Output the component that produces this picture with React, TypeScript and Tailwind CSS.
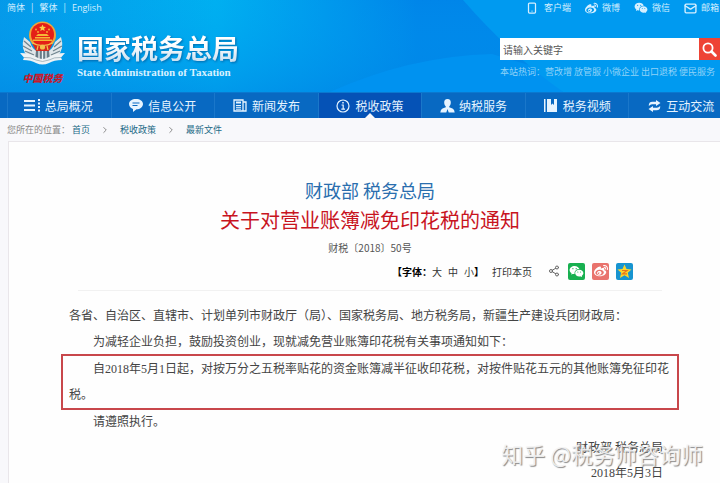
import type { ReactNode } from "react";
import { ChevronRight, Mail, Share2, Smartphone } from "lucide-react";
import { FaWeibo } from "react-icons/fa";
import { RiWechatFill } from "react-icons/ri";

const hotWords = ["营改增", "放管服", "小微企业", "出口退税", "便民服务"];

const navItems: { label: string; icon: ReactNode; active?: boolean }[] = [
  { label: "总局概况", icon: <ListIcon /> },
  { label: "信息公开", icon: <ChatIcon /> },
  { label: "新闻发布", icon: <NewsIcon /> },
  { label: "税收政策", icon: <InfoIcon />, active: true },
  { label: "纳税服务", icon: <PersonIcon /> },
  { label: "税务视频", icon: <BookIcon /> },
  { label: "互动交流", icon: <SwapIcon /> },
];

export default function App() {
  return (
    <div className="min-h-screen overflow-hidden bg-[#f8f8fb] font-['Noto_Sans_CJK_SC',sans-serif] text-[#333]">
      <Header />
      <MainNav />
      <Breadcrumb />
      <Article />
    </div>
  );
}

function Header() {
  return (
    <header className="relative h-[92px] bg-linear-to-r from-[#0698e8] via-[#00b0f0] via-30% to-[#0082e8] to-58% text-white">
      <HeaderBackdrop />
      <div className="relative flex h-4 items-center justify-between text-[9px] leading-4 text-[#d5efff]">
        <div className="flex gap-1.5 pl-[7px]">
          <a href="#jian">简体</a>
          <span>|</span>
          <a href="#fan">繁体</a>
          <span>|</span>
          <a href="#en" className="font-['Open_Sans',sans-serif]">English</a>
        </div>
        <div className="flex gap-3.5 pr-px">
          <a href="#app" className="flex items-center gap-1.5">
            <Smartphone size={12} strokeWidth={2.5} />
            客户端
          </a>
          <a href="#weibo" className="flex items-center gap-1">
            <FaWeibo size={13} />
            微博
          </a>
          <a href="#wechat" className="flex items-center gap-1">
            <RiWechatFill size={14} />
            微信
          </a>
          <a href="#mail" className="flex items-center gap-1">
            <Mail size={13} strokeWidth={2.5} />
            邮箱
          </a>
        </div>
      </div>

      <div className="relative flex items-start justify-between">
        <div className="flex gap-3 pl-5">
          <div className="flex w-[45px] flex-col items-center pt-1">
            <Emblem />
            <div className="text-[10px] leading-4 font-black whitespace-nowrap text-[#c8182b] italic">
              中国税务
            </div>
          </div>
          <div className="pt-4">
            <h1 className="bg-linear-to-b from-white from-40% to-[#c3dcee] bg-clip-text text-[27px] leading-8 font-bold text-transparent drop-shadow-[1px_1px_1px_rgba(0,50,110,0.5)]">
              国家税务总局
            </h1>
            <p className="font-['Liberation_Serif',serif] text-[11px] leading-4 font-bold text-[#d9f1ff]">
              State Administration of Taxation
            </p>
          </div>
        </div>

        <div className="w-[220px] pt-[22px]">
          <form className="flex h-[22px]">
            <input
              type="text"
              aria-label="站内搜索"
              placeholder="请输入关键字"
              className="min-w-0 flex-1 bg-white px-[3px] text-[10px] text-[#333] outline-none placeholder:text-[#555]"
            />
            <button type="button" aria-label="搜索" className="flex w-[21px] items-center justify-center bg-[#ee4335]">
              <SearchIcon />
            </button>
          </form>
          <div className="flex gap-0.5 pt-1 text-[9px] leading-4 whitespace-nowrap text-[#8fd2f8]">
            <span className="-mr-0.5">本站热词：</span>
            {hotWords.map((word) => (
              <a key={word} href="#hot">{word}</a>
            ))}
          </div>
        </div>
      </div>
    </header>
  );
}

function MainNav() {
  return (
    <nav className="border-t border-[#0a78cf] bg-[#0869c2]">
      <ul className="-mr-3 ml-[7px] grid grid-cols-7">
        {navItems.map((item) => (
          <li key={item.label} className="border-l border-[#1a77ca]">
            <a
              href="#nav"
              className={`relative flex h-[25px] items-center justify-center gap-[3px] pr-0.5 text-[12px] whitespace-nowrap text-[#e6f4ff] ${item.active ? "bg-[#0552b6]" : ""}`}
            >
              <span className="flex w-[18px] justify-center">{item.icon}</span>
              {item.label}
              {item.active && (
                <span className="absolute bottom-0 left-1/2 size-0 -translate-x-1/2 border-x-5 border-b-5 border-x-transparent border-b-[#f8f8fb]" />
              )}
            </a>
          </li>
        ))}
      </ul>
    </nav>
  );
}

function Breadcrumb() {
  return (
    <div className="flex h-[23px] items-center gap-0.5 pl-[7px] text-[9px] text-[#888]">
      <span>您所在的位置：</span>
      <div className="flex items-center gap-2.5 text-[#236a86]">
        <a href="#home">首页</a>
        <ChevronRight size={10} className="text-[#777]" />
        <a href="#policy">税收政策</a>
        <ChevronRight size={10} className="text-[#777]" />
        <a href="#latest">最新文件</a>
      </div>
    </div>
  );
}

function Article() {
  return (
    <main className="ml-2 border-t border-l border-[#e9e6ea] bg-[#fefefe] pt-[34px] pl-[11px]">
      <div className="text-center">
        <div className="text-[18px] leading-7 text-[#2a6eae]">财政部 税务总局</div>
        <h2 className="text-[20px] leading-8 text-[#c8141e]">关于对营业账簿减免印花税的通知</h2>
        <div className="text-[10px] leading-6 text-[#555]">财税〔2018〕50号</div>
      </div>

      <div className="mx-auto flex h-[22px] max-w-[602px] items-center justify-end gap-2 pr-[38px] text-[10px]">
        <div className="flex">
          <b className="text-black">【字体：</b>
          <button type="button">大</button>
          <button type="button" className="mx-[6px]">中</button>
          <button type="button">小</button>
          <b className="text-black">】</b>
        </div>
        <button type="button" className="mr-2">打印本页</button>
        <div className="flex items-center gap-[7px] text-white">
          <button type="button" aria-label="分享" className="mr-px text-[#666]">
            <Share2 size={12} />
          </button>
          <button type="button" aria-label="分享到微信" className="flex size-[17px] items-center justify-center rounded-xs bg-[#18b050]">
            <RiWechatFill size={15} />
          </button>
          <button type="button" aria-label="分享到微博" className="flex size-[17px] items-center justify-center rounded-xs bg-[#e9736d]">
            <FaWeibo size={14} />
          </button>
          <button type="button" aria-label="分享到QQ空间" className="flex size-[17px] items-center justify-center rounded-xs bg-[#1794d0]">
            <QzoneIcon />
          </button>
        </div>
      </div>
      <hr className="mx-[58px] mt-2 border-[#f1f1f1]" />

      <div className="mx-auto mt-3 max-w-[602px] font-['Liberation_Serif','Noto_Sans_CJK_SC',sans-serif] text-[12px] leading-[26px] text-[#444]">
        <p>各省、自治区、直辖市、计划单列市财政厅（局）、国家税务局、地方税务局，新疆生产建设兵团财政局：</p>
        <p className="indent-6">为减轻企业负担，鼓励投资创业，现就减免营业账簿印花税有关事项通知如下：</p>
        <div className="-mx-2 -my-px border-2 border-[#c8474b] px-1.5">
          <p className="indent-6">
            自2018年5月1日起，对按万分之五税率贴花的资金账簿减半征收印花税，对按件贴花五元的其他账簿免征印花税。
          </p>
        </div>
        <p className="indent-6">请遵照执行。</p>
        <div className="relative pr-2 text-right">
          <p>财政部 税务总局</p>
          <p className="leading-6">2018年5月3日</p>
          <Watermark />
        </div>
      </div>
    </main>
  );
}

function Watermark() {
  return (
    <div className="absolute top-0 -right-8 font-['Noto_Sans_CJK_SC',sans-serif] text-[22px] leading-9 whitespace-nowrap text-[#f4f4f4]/90 [text-shadow:1px_1px_1px_#888]">
      知乎 @税务师咨询师
    </div>
  );
}

// light bands that sweep over the banner
function HeaderBackdrop() {
  return (
    <svg className="absolute inset-0 size-full" viewBox="0 0 720 92" preserveAspectRatio="none" aria-hidden="true">
      <defs>
        <linearGradient id="glow" x1="0" y1="0" x2="0" y2="1">
          <stop offset="0" stopColor="#00a8f4" stopOpacity="0.1" />
          <stop offset="1" stopColor="#0088e6" stopOpacity="0.55" />
        </linearGradient>
      </defs>
      <rect width="720" height="92" fill="url(#glow)" />
      <path d="M330 92Q410 56 492 54L532 66L563 92Z" fill="#0092f0" />
      <path d="M463 0H720V92H563Q510 54 463 0Z" fill="#009af0" />
    </svg>
  );
}

function Emblem() {
  return (
    <svg width="45" height="50" viewBox="0 0 45 50" aria-hidden="true">
      <path d="M4 17Q0 30 8 36L16 41H29L37 36Q45 30 41 17L35 22Q33 29 28 31H17Q12 29 10 22Z" fill="#dfe6e9" />
      <path d="M4 21L11 27M3 26L12 31M5 31L14 35M41 21L34 27M42 26L33 31M40 31L31 35" stroke="#71858f" strokeWidth="1.3" />
      <circle cx="22.500" cy="15" r="13.500" fill="#efa63a" />
      <circle cx="22.500" cy="14.500" r="11.500" fill="#e41f17" />
      <path d="M22.500 4.500L23.500 6.800L26 7L24.100 8.600L24.700 11L22.500 9.700L20.300 11L20.900 8.600L19 7L21.500 6.800Z" fill="#fbd04a" />
      <g fill="#f6b636">
        <circle cx="16" cy="9.500" r="0.9" />
        <circle cx="18" cy="12" r="0.9" />
        <circle cx="27" cy="12" r="0.9" />
        <circle cx="29" cy="9.500" r="0.9" />
        <path d="M16 16L18 14H27L29 16ZM15 17H30V18.500H15ZM13 19.500H32V21H13Z" />
      </g>
      <path d="M12 23Q22.500 28 33 23L29 31H16Z" fill="#d8281c" />
      <path d="M12 23Q22.500 28 33 23M18 26L17 30M27 26L28 30" stroke="#f2c14c" strokeWidth="1.2" fill="none" />
      <circle cx="22.500" cy="27" r="2.600" fill="#f2c14c" />
      <path d="M16 31H29L30 40H15Z" fill="#687c87" />
      <path d="M19 31V40M22.500 31V41M26 31V40" stroke="#eef3f5" strokeWidth="1.300" />
      <path d="M0 33Q10 33 16 37Q22.500 41 29 37Q35 33 45 33L41 37.500L42 40Q34 40 29 43Q22.500 46 16 43Q11 40 3 40L4 37.500Z" fill="#eef2f4" />
      <path d="M4 37.500Q11 37 16 40Q22.500 43 29 40Q34 37 41 37.500" stroke="#97a9b2" strokeWidth="0.8" fill="none" />
    </svg>
  );
}

function SearchIcon() {
  return (
    <svg width="15" height="15" viewBox="0 0 15 15" fill="none" stroke="currentColor" aria-hidden="true">
      <circle cx="6" cy="6" r="4.600" strokeWidth="1.800" />
      <path d="M9.500 9.500L13.500 13.500" strokeWidth="2.600" strokeLinecap="round" />
    </svg>
  );
}

function ListIcon() {
  return (
    <svg width="18" height="13" viewBox="0 0 18 13" fill="currentColor" aria-hidden="true">
      <path d="M0 1H11V3H0ZM0 5.500H11V7.500H0ZM0 10H11V12H0ZM14 0H16V2H14ZM14 3.500H16V5.500H14ZM14 7H16V9H14ZM14 10.500H16V12.500H14Z" />
    </svg>
  );
}

function ChatIcon() {
  return (
    <svg width="14" height="13" viewBox="0 0 14 13" aria-hidden="true">
      <path d="M7 0C3 0 0 2 0 5C0 7.500 2 9.300 4 10L4 13L7.500 10.300C11 10.300 14 8 14 5C14 2 11 0 7 0Z" fill="currentColor" />
      <path d="M3.500 4H10.500M3.500 6.500H8.500" stroke="#0869c2" strokeWidth="1.200" />
    </svg>
  );
}

function NewsIcon() {
  return (
    <svg width="14" height="13" viewBox="0 0 14 13" fill="none" stroke="currentColor" aria-hidden="true">
      <path d="M1 1H10V12H1ZM10 3H13V12H10" strokeWidth="1.300" />
      <path d="M3 6.500H8M3 8.300H8M3 10.200H8" />
      <path d="M3 3.500H8" strokeWidth="2" />
    </svg>
  );
}

function InfoIcon() {
  return (
    <svg width="14" height="14" viewBox="0 0 14 14" fill="none" stroke="currentColor" aria-hidden="true">
      <circle cx="7" cy="7" r="6" strokeWidth="1.200" />
      <path d="M5.500 6H7.200V10M5.300 10.200H9" strokeWidth="1.200" />
      <path d="M7 3V4.500" strokeWidth="1.500" />
    </svg>
  );
}

function PersonIcon() {
  return (
    <svg width="15" height="14" viewBox="0 0 15 14" fill="currentColor" aria-hidden="true">
      <path d="M7.500 0C5.200 0 4 1.500 4.200 3.700C4.300 5.500 5 6.700 5.800 7.400V8.300L2.500 9.500Q.5 10.500 .3 13.500H6.300L7.500 10L8.700 13.500H14.700Q14.500 10.500 12.500 9.500L9.200 8.300V7.400C10 6.700 10.700 5.500 10.800 3.700C11 1.500 9.800 0 7.500 0Z" />
    </svg>
  );
}

function BookIcon() {
  return (
    <svg width="13" height="13" viewBox="0 0 13 13" fill="currentColor" aria-hidden="true">
      <path d="M0 0H1.500V13H0ZM3 0H7V6L8.500 4.500L10 6V0H13V13H3Z" />
    </svg>
  );
}

function SwapIcon() {
  return (
    <svg width="13" height="12" viewBox="0 0 13 12" fill="currentColor" aria-hidden="true">
      <path d="M8 0L12.500 3L8 6V4.200H4Q2.500 4.200 .8 6Q.5 1.700 4.500 1.700H8ZM5 6L.5 9L5 12V10.300H8.500Q12.500 10.300 12.200 6Q10.500 7.800 9 7.800H5Z" />
    </svg>
  );
}

function QzoneIcon() {
  return (
    <svg width="15" height="15" viewBox="0 0 15 15" aria-hidden="true">
      <path d="M7.500 .5L9.500 5L14.500 5.500L10.800 8.800L12 14L7.500 11.300L3 14L4.200 8.800L.5 5.500L5.500 5Z" fill="#fbd52c" />
      <path d="M5 6.500H10L5.500 9.800H10" stroke="#e8741c" strokeWidth="1.200" fill="none" />
    </svg>
  );
}
